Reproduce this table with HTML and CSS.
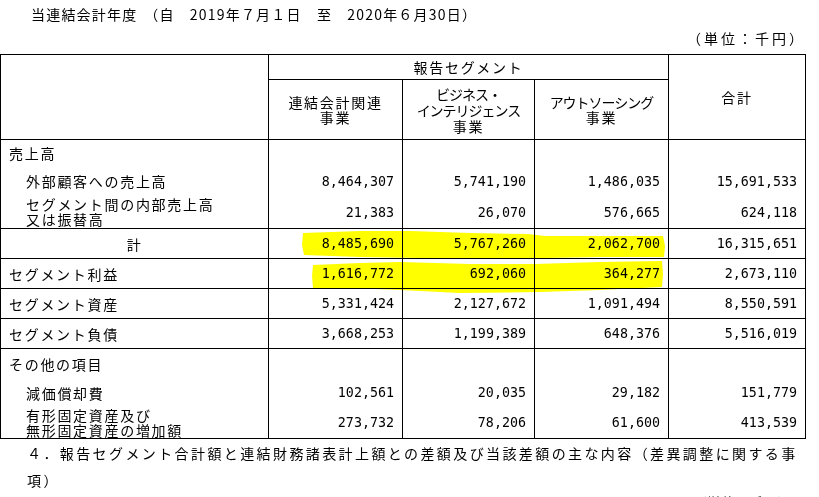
FILE: index.html
```html
<!DOCTYPE html>
<html lang="ja">
<head>
<meta charset="utf-8">
<link rel="stylesheet" href="styles.css">
</head>
<body>
<div class="page">
  <p class="title">当連結会計年<span class="gap">度</span>（自　2019年７月１日　至　2020年６月30日）</p>
  <p class="unit">（単位：千円）</p>
  <table class="seg">
    <colgroup>
      <col class="c1"><col class="c2"><col class="c3"><col class="c4"><col class="c5">
    </colgroup>
    <thead>
      <tr class="h1">
        <th rowspan="2"></th>
        <th colspan="3">報告セグメント</th>
        <th rowspan="2">合計</th>
      </tr>
      <tr class="h2">
        <th>連結会計関連<br>事業</th>
        <th class="three"><span class="tight">ビジネス・</span><br><span class="tight">インテリジェンス</span><br>事業</th>
        <th><span class="tight">アウトソーシング</span><br>事業</th>
      </tr>
    </thead>
    <tbody>
      <tr class="r26 open">
        <td class="lbl">売上高</td><td></td><td></td><td></td><td></td>
      </tr>
      <tr class="r30 open">
        <td class="lbl ind">外部顧客への売上高</td><td class="num">8,464,307</td><td class="num">5,741,190</td><td class="num">1,486,035</td><td class="num">15,691,533</td>
      </tr>
      <tr class="r33">
        <td class="lbl ind two">セグメント間の内部売上高<br>又は振替高</td><td class="num">21,383</td><td class="num">26,070</td><td class="num">576,665</td><td class="num">624,118</td>
      </tr>
      <tr class="r30">
        <td class="lbl ctr">計</td><td class="num">8,485,690</td><td class="num">5,767,260</td><td class="num">2,062,700</td><td class="num">16,315,651</td>
      </tr>
      <tr class="r30">
        <td class="lbl">セグメント利益</td><td class="num">1,616,772</td><td class="num">692,060</td><td class="num">364,277</td><td class="num">2,673,110</td>
      </tr>
      <tr class="r30">
        <td class="lbl">セグメント資産</td><td class="num">5,331,424</td><td class="num">2,127,672</td><td class="num">1,091,494</td><td class="num">8,550,591</td>
      </tr>
      <tr class="r30">
        <td class="lbl">セグメント負債</td><td class="num">3,668,253</td><td class="num">1,199,389</td><td class="num">648,376</td><td class="num">5,516,019</td>
      </tr>
      <tr class="r29 open">
        <td class="lbl">その他の項目</td><td></td><td></td><td></td><td></td>
      </tr>
      <tr class="r29 open">
        <td class="lbl ind">減価償却費</td><td class="num">102,561</td><td class="num">20,035</td><td class="num">29,182</td><td class="num">151,779</td>
      </tr>
      <tr class="r32">
        <td class="lbl ind two">有形固定資産及び<br>無形固定資産の増加額</td><td class="num">273,732</td><td class="num">78,206</td><td class="num">61,600</td><td class="num">413,539</td>
      </tr>
    </tbody>
  </table>
  <p class="note">４．報告セグメント合計額と連結財務諸表計上額との差額及び当該差額の主な内容（差異調整に関する事項）</p>
  <p class="cut">（単位：千円）</p>
  <svg class="marker" width="819" height="497" viewBox="0 0 819 497">
    <polygon points="303,233 360,231 410,231 470,233 528,234 545,236 605,236 663,236 665,246 664,257 600,257 545,258 480,258 420,258 360,257 304,255 302,245"/>
    <polygon points="313,265 360,263 400,262 470,264 535,264 600,262 662,261 663,274 662,287 600,290 540,292 460,293 400,290 350,288 313,288 312,276"/>
  </svg>
</div>
</body>
</html>
```

FILE: styles.css
```css
html, body {
  margin: 0;
  padding: 0;
  background: #fff;
}

body {
  font-family: "Noto Sans CJK JP", sans-serif;
  color: #000;
  font-size: 14px;
}

.page {
  position: relative;
  width: 819px;
  height: 497px;
  overflow: hidden;
}

.title {
  margin: 0;
  padding: 4px 0 0 31px;
  line-height: 20px;
  letter-spacing: 1.2px;
}

.title .gap {
  letter-spacing: 8px;
}

.unit {
  margin: 4px 0 6px;
  width: 806px;
  text-align: right;
  line-height: 20px;
  letter-spacing: 3px;
}

.seg {
  border-collapse: separate;
  border-spacing: 0;
  table-layout: fixed;
  width: 806px;
  border-top: 1px solid #000;
  border-left: 1px solid #000;
}

.c1 { width: 268px; }
.c2 { width: 134px; }
.c3 { width: 132px; }
.c4 { width: 134px; }
.c5 { width: 137px; }

.seg th,
.seg td {
  border-right: 1px solid #000;
  border-bottom: 1px solid #000;
  padding: 0;
  font-weight: normal;
  vertical-align: middle;
  letter-spacing: 1.7px;
}

.seg th {
  text-align: center;
  line-height: 15px;
}

.seg th.three {
  line-height: 16px;
}

.tight {
  letter-spacing: -1px;
}

.h1 { height: 25px; }
.h2 { height: 60px; }
.r26 { height: 26px; }
.r29 { height: 29px; }
.r30 { height: 30px; }
.r32 { height: 32px; }
.r33 { height: 33px; }

.seg tr.open td {
  border-bottom: none;
}

.lbl {
  padding-left: 8px !important;
  text-align: left;
  line-height: 18px;
}

.lbl.ind {
  padding-left: 25px !important;
}

.lbl.two {
  line-height: 15px;
}

.lbl.ctr {
  text-align: center;
  padding-left: 0 !important;
}

.num {
  font-family: "DejaVu Sans Mono", monospace;
  font-size: 13.33px;
  letter-spacing: 0 !important;
  text-align: right;
  padding-right: 8px !important;
}

.note {
  margin: 1px 0 0;
  padding-left: 27px;
  width: 780px;
  line-height: 27px;
  letter-spacing: 2.4px;
}

.cut {
  margin: 0;
  width: 792px;
  text-align: right;
  line-height: 16px;
  letter-spacing: 0.2px;
}

.marker {
  position: absolute;
  left: 0;
  top: 0;
  pointer-events: none;
  mix-blend-mode: multiply;
}

.marker polygon {
  fill: #ffff00;
}
```
